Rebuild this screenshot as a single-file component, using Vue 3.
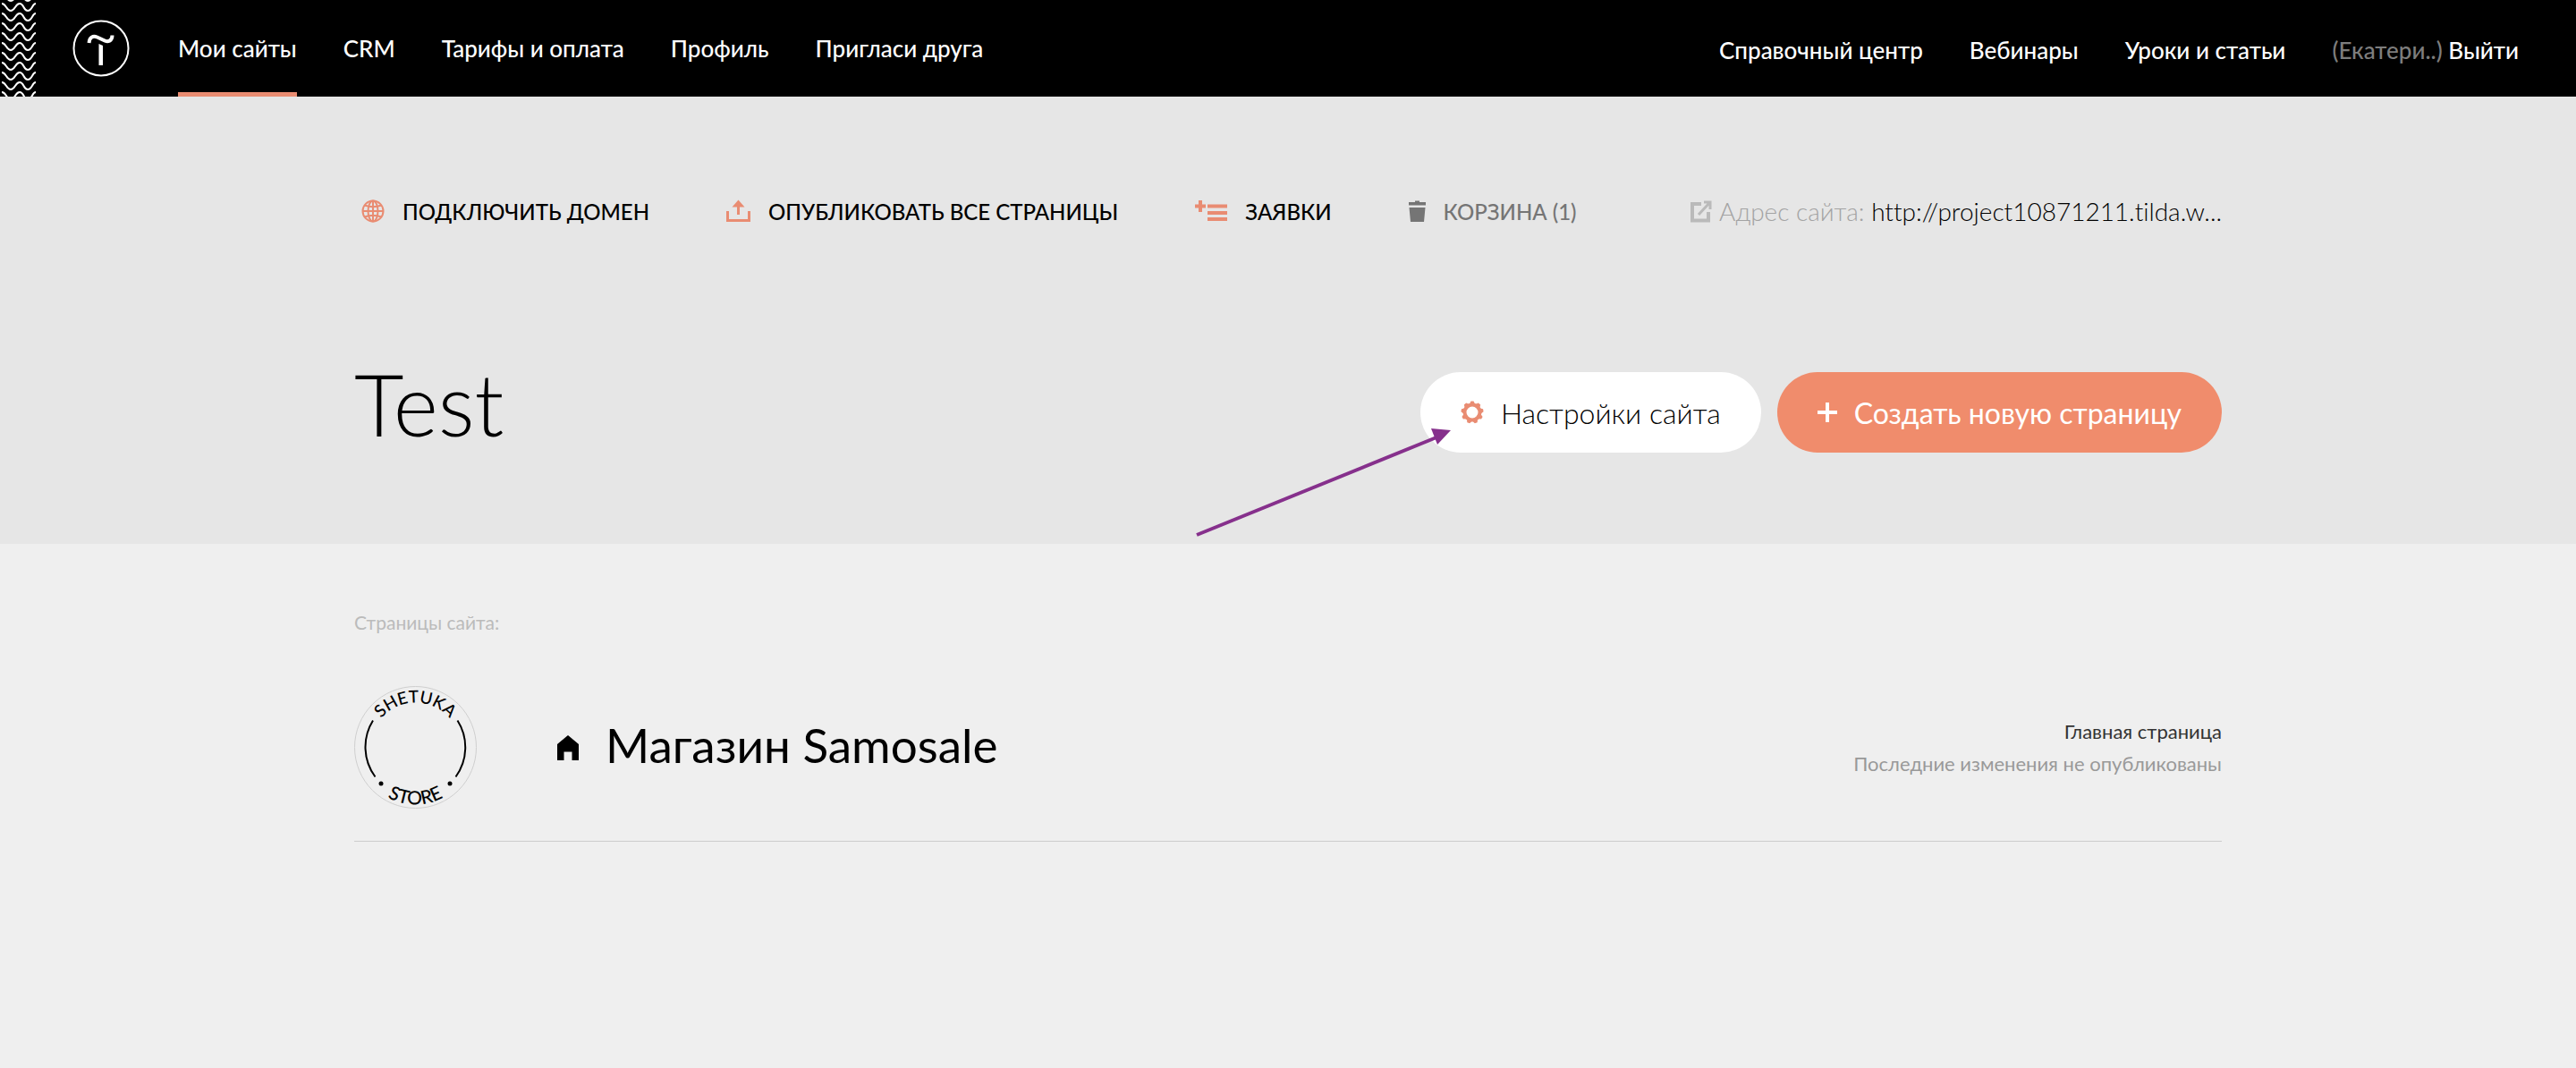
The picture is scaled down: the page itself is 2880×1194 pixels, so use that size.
<template>
  <div class="page">
    <header class="topbar">
      <svg class="pattern" width="40" height="108" viewBox="0 0 40 108" aria-hidden="true">
        <path v-for="n in 11" :key="n" :d="wave(n)" />
      </svg>
      <a class="logo" href="#" aria-label="Tilda">
        <svg width="64" height="64" viewBox="0 0 64 64">
          <circle cx="32" cy="32" r="30.500" fill="none" stroke="#fff" stroke-width="2" />
          <path d="M18.500 26 C19 19.500 23 17.500 27.500 19.500 L35 23 C39.500 25.500 44.500 24 44.500 17.500" fill="none" stroke="#fff" stroke-width="4" />
          <path d="M29.500 27 L34 29 V51 H29.500 Z" fill="#fff" />
        </svg>
      </a>
      <nav class="menu">
        <a v-for="item in menu" :key="item" href="#" :class="{ active: item === 'Мои сайты' }">{{ item }}</a>
      </nav>
      <nav class="menu menu-right">
        <a v-for="item in links" :key="item" href="#">{{ item }}</a>
        <a href="#"><span class="user">(Екатери..)</span> Выйти</a>
      </nav>
    </header>

    <section class="project">
      <div class="container">
        <div class="toolbar">
          <a class="tool" href="#">
            <svg class="accent" width="26" height="26" viewBox="0 0 26 26" fill="none" stroke-width="2">
              <circle cx="13" cy="13" r="11.500" />
              <ellipse cx="13" cy="13" rx="5.500" ry="11.500" />
              <path d="M13 1.500V24.500M1.500 13H24.500M3.500 6.500Q13 10 22.500 6.500M3.500 19.500Q13 16 22.500 19.500" />
            </svg>
            ПОДКЛЮЧИТЬ ДОМЕН
          </a>
          <a class="tool" href="#">
            <svg class="accent" width="27" height="26" viewBox="0 0 27 26" fill="none" stroke-width="2">
              <path d="M1.500 13V23.500H25.500V13" stroke-width="3" />
              <path d="M13.500 17V7" stroke-width="3" />
              <path d="M6.500 8.500L13.500 0.500L20.500 8.500Z" fill="#e98c72" stroke="none" />
            </svg>
            ОПУБЛИКОВАТЬ ВСЕ СТРАНИЦЫ
          </a>
          <a class="tool" href="#">
            <svg class="accent" width="36" height="26" viewBox="0 0 36 26" fill="none" stroke-width="4">
              <path d="M0 7.500H12M6 1V14M14 7.500H36M14 15H36M14 22H36" />
            </svg>
            ЗАЯВКИ
          </a>
          <a class="tool trash" href="#">
            <svg width="19" height="26" viewBox="0 0 19 26" fill="#757575">
              <path d="M0 3H7V1.500H12V3H19V6.500H0ZM0.500 9H18.500L17 25H2Z" />
            </svg>
            КОРЗИНА (1)
          </a>
          <div class="address">
            <svg width="24" height="25" viewBox="0 0 24 25" fill="none" stroke="#bababa" stroke-width="4">
              <path d="M12 4H2V22.500H20V13" />
              <path d="M9 16L21 3M15 2H22V10" stroke-width="3" />
            </svg>
            <span>Адрес сайта: <a href="#">http://project10871211.tilda.w...</a></span>
          </div>
        </div>

        <div class="heading">
          <h1>Test</h1>
          <div class="buttons">
            <button class="btn btn-white" type="button">
              <svg width="26" height="26" viewBox="-13 -13 26 26">
                <circle r="8.500" fill="none" stroke="#e98c72" stroke-width="4" />
                <path v-for="n in 9" :key="n" d="M-3 -9.500L-1.500 -12.500H1.500L3 -9.500Z" fill="#e98c72" :transform="`rotate(${(n - 1) * 40})`" />
              </svg>
              Настройки сайта
            </button>
            <button class="btn btn-accent" type="button">
              <svg width="22" height="22" viewBox="0 0 22 22">
                <path d="M11 0V22M0 11H22" stroke="#fff" stroke-width="4" />
              </svg>
              Создать новую страницу
            </button>
            <svg class="arrow" width="290" height="124" viewBox="0 0 290 124" aria-hidden="true">
              <path d="M2 121L270 12" stroke="#86308c" stroke-width="4" />
              <path d="M286 4L264 2L271 20Z" fill="#86308c" />
            </svg>
          </div>
        </div>
      </div>
    </section>

    <main class="container pages">
      <h2>Страницы сайта:</h2>
      <article class="row">
        <svg class="badge" width="137" height="137" viewBox="-68.500 -68.500 137 137">
          <defs>
            <path id="arc-top" d="M-50 0A50 50 0 0 1 50 0" />
            <path id="arc-bottom" d="M-64 0A64 64 0 0 0 64 0" />
          </defs>
          <circle r="68" fill="none" stroke="#cfcfcf" />
          <path d="M-47.500 -30A56 56 0 0 0 -45 33M47 -30A56 56 0 0 1 45 33" fill="none" stroke="#000" stroke-width="2" />
          <circle cx="-38.500" cy="40.500" r="2.500" />
          <circle cx="38.500" cy="40.500" r="2.500" />
          <text class="arc-name"><textPath href="#arc-top" startOffset="50%" text-anchor="middle">SHETUKA</textPath></text>
          <text class="arc-kind"><textPath href="#arc-bottom" startOffset="50%" text-anchor="middle">STORE</textPath></text>
        </svg>
        <svg class="home" width="24" height="28" viewBox="0 0 24 28">
          <path d="M12 0L24 10V28H16.500V18.500H7.500V28H0V10Z" />
        </svg>
        <a class="title" href="#">Магазин Samosale</a>
        <div class="status">
          <p>Главная страница</p>
          <p class="muted">Последние изменения не опубликованы</p>
        </div>
      </article>
    </main>
  </div>
</template>

<script setup>
const menu = ['Мои сайты', 'CRM', 'Тарифы и оплата', 'Профиль', 'Пригласи друга']
const links = ['Справочный центр', 'Вебинары', 'Уроки и статьи']

// one zigzag line of the side ornament
function wave(n) {
  const top = (n - 1) * 11 - 7
  const low = top + 8
  return `M2 ${top}C7 ${top} 7 ${low} 12 ${low}S17 ${top} 22 ${top}S26 ${low} 31 ${low}S36 ${top} 40 ${top}`
}
</script>

<style>
body {
  background: #efefef;
}
</style>

<style scoped>
.page {
  font-family: Lato, "Open Sans", sans-serif;
  font-variant-ligatures: none;
  color: #000;
}

a {
  color: inherit;
  text-decoration: none;
}

.topbar {
  display: flex;
  align-items: center;
  height: 108px;
  padding-right: 64px;
  background: #000;
  color: #fff;
}

.pattern {
  fill: none;
  stroke: #fff;
  stroke-width: 2;
}

.logo {
  display: flex;
  margin: 0 54px 0 41px;
}

.menu {
  display: flex;
  align-self: stretch;
  gap: 52px;
  font-size: 26px;
  font-weight: 500;
  line-height: 108px;
  white-space: nowrap;
}

.menu-right {
  margin-left: auto;
  line-height: 112px;
}

.active {
  box-shadow: inset 0 -5px #e98c72;
}

.user {
  color: #7d7d7d;
}

.container {
  width: 72.5%;
  margin: 0 auto;
}

.project {
  padding: 108px 0 102px;
  background: #e6e6e6;
}

.toolbar {
  display: flex;
  align-items: center;
  gap: 86px;
  height: 40px;
  padding-left: 8px;
  font-size: 24px;
  font-weight: 500;
  white-space: nowrap;
}

.tool {
  display: flex;
  align-items: center;
  gap: 20px;
}

.accent {
  stroke: #e98c72;
}

.trash {
  color: #757575;
}

.address {
  display: flex;
  align-items: center;
  gap: 8px;
  margin-left: auto;
  font-size: 28px;
  font-weight: 300;
  line-height: 40px;
  color: #a3a3a3;
}

.address a {
  color: #000;
}

.heading {
  display: flex;
  align-items: flex-start;
  justify-content: space-between;
  margin-top: 160px;
  height: 90px;
}

h1 {
  margin: 0;
  font-size: 96px;
  font-weight: 300;
  line-height: 70px;
}

.buttons {
  position: relative;
  display: flex;
  gap: 18px;
}

.btn {
  display: flex;
  align-items: center;
  gap: 19px;
  height: 90px;
  padding: 0 45px;
  border: 0;
  border-radius: 45px;
  font-family: inherit;
  font-size: 32px;
  white-space: nowrap;
}

.btn-white {
  background: #fff;
  color: #000;
  font-weight: 300;
}

.btn-accent {
  background: #f08c6c;
  color: #fff;
}

.arrow {
  position: absolute;
  left: -252px;
  top: 61px;
}

h2 {
  margin: 72px 0 56px;
  font-size: 21px;
  font-weight: 400;
  line-height: 31px;
  color: #bbb;
}

.row {
  display: flex;
  align-items: center;
  padding-bottom: 36px;
  border-bottom: 1px solid #ccc;
}

.badge {
  overflow: visible;
}

.badge text {
  font-weight: 500;
}

.arc-name {
  font-size: 19px;
}

.arc-kind {
  font-size: 21px;
}

.home {
  margin: 0 30px 0 90px;
}

.title {
  padding-bottom: 6px;
  font-size: 53px;
}

.status {
  margin-left: auto;
  font-size: 22px;
  line-height: 36px;
  text-align: right;
  color: #333;
}

.status p {
  margin: 0;
}

.status .muted {
  color: #999;
}
</style>
